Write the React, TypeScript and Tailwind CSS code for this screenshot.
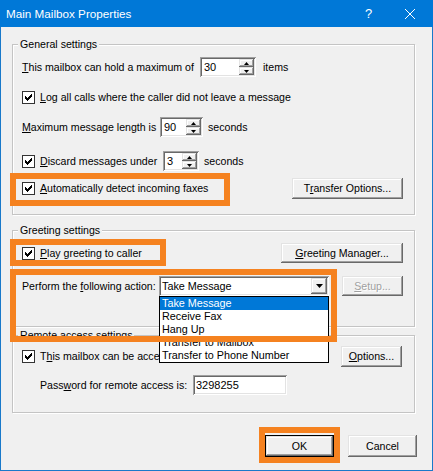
import React from "react";

const raised =
  "bg-[#f0f0f0] shadow-[inset_-1px_-1px_0_#696969,inset_1px_1px_0_#e3e3e3,inset_-2px_-2px_0_#a0a0a0,inset_2px_2px_0_#fff]";
const sunken =
  "bg-white shadow-[inset_1px_1px_0_#a0a0a0,inset_-1px_-1px_0_#fff,inset_2px_2px_0_#696969,inset_-2px_-2px_0_#e3e3e3]";
const group =
  "shrink-0 border border-[#c4c4c4] shadow-[inset_1px_1px_0_#fff,1px_1px_0_#fff]";

function U({ children }: { children: React.ReactNode }) {
  return <span className="underline underline-offset-[1px]">{children}</span>;
}

function Check() {
  const tops = [4, 5, 6, 5, 4, 3, 2];
  return (
    <span className="flex h-[13px] w-[13px] shrink-0 border border-[#333] bg-white">
      <svg width="11" height="11" viewBox="0 0 11 11">
        {tops.map((t, i) => (
          <rect key={i} x={2 + i} y={t} width="1" height="3" fill="#000" />
        ))}
      </svg>
    </span>
  );
}

function Btn({
  className,
  children,
  disabled,
}: {
  className: string;
  children: React.ReactNode;
  disabled?: boolean;
}) {
  return (
    <div
      className={`flex shrink-0 items-center justify-center ${raised} ${className} ${
        disabled ? "text-[#a0a0a0] [text-shadow:1px_1px_0_#fff]" : ""
      }`}
    >
      {children}
    </div>
  );
}

function Spin({ className, value }: { className: string; value: string }) {
  return (
    <div className={`flex h-[20px] shrink-0 p-[2px] ${sunken} ${className}`}>
      <span className="flex-1 pl-[2px] text-[11px] leading-[16px]">{value}</span>
      <div className="flex w-[15px] flex-col">
        <div className={`flex h-[8px] items-center justify-center ${raised}`}>
          <svg width="5" height="3" viewBox="0 0 5 3">
            <path d="M2.5 0L5 3H0z" fill="#000" />
          </svg>
        </div>
        <div className={`flex h-[8px] items-center justify-center ${raised}`}>
          <svg width="5" height="3" viewBox="0 0 5 3">
            <path d="M0 0H5L2.5 3z" fill="#000" />
          </svg>
        </div>
      </div>
    </div>
  );
}

function Legend({ children }: { children: React.ReactNode }) {
  return (
    <div className="-mt-[8px] ml-[5px] h-[14px] w-fit bg-[#f0f0f0] px-[2px] leading-[14px]">
      {children}
    </div>
  );
}

export default function App() {
  return (
    <div className="relative flex h-[471px] w-[433px] flex-col overflow-hidden font-['Liberation_Sans',Arial,sans-serif] text-[10.6px] leading-[13px] text-black">
      {/* Title bar */}
      <div className="flex h-[27px] shrink-0 items-center bg-[#0078d7] pl-[6px] pr-[18px] text-white">
        <span className="text-[11.7px] leading-[14px]">Main Mailbox Properties</span>
        <span className="ml-auto mr-[32px] w-[9px] text-center text-[13px] leading-[14px]">?</span>
        <svg width="10" height="10" viewBox="0 0 10 10">
          <path d="M0 0L10 10M10 0L0 10" stroke="#fff" strokeWidth="1" />
        </svg>
      </div>

      {/* Body */}
      <div className="flex flex-1 flex-col border-x border-b border-[#1979ca] bg-[#f0f0f0]">
        {/* General settings */}
        <div className={`ml-[11px] mt-[17px] h-[171px] w-[403px] ${group}`}>
          <Legend>General settings</Legend>
          <div className="mt-[6px] flex h-[20px] items-center pl-[9px]">
            <span className="w-[178px]">
              <U>T</U>his mailbox can hold a maximum of
            </span>
            <Spin className="w-[56px]" value="30" />
            <span className="ml-[7px]">items</span>
          </div>
          <div className="mt-[10px] flex h-[20px] items-center gap-[5px] pl-[9px]">
            <Check />
            <span>
              <U>L</U>og all calls where the caller did not leave a message
            </span>
          </div>
          <div className="mt-[10px] flex h-[20px] items-center pl-[9px]">
            <span className="w-[138px]">
              <U>M</U>aximum message length is
            </span>
            <Spin className="w-[43px]" value="90" />
            <span className="ml-[5px]">seconds</span>
          </div>
          <div className="mt-[14px] flex h-[20px] items-center pl-[9px]">
            <Check />
            <span className="ml-[5px] w-[123px]">
              <U>D</U>iscard messages under
            </span>
            <Spin className="w-[36px]" value="3" />
            <span className="ml-[5px]">seconds</span>
          </div>
          <div className="mt-[7px] flex h-[20px] items-center pl-[9px] pr-[11px]">
            <Check />
            <span className="ml-[5px]">
              <U>A</U>utomatically detect incoming faxes
            </span>
            <Btn className="ml-auto h-[21px] w-[111px]">
              <span>
                T<U>r</U>ansfer Options...
              </span>
            </Btn>
          </div>
        </div>

        {/* Greeting settings */}
        <div className={`ml-[11px] mt-[15px] h-[97px] w-[403px] ${group}`}>
          <Legend>Greeting settings</Legend>
          <div className="mt-[6px] flex h-[20px] items-center pl-[9px] pr-[11px]">
            <Check />
            <span className="ml-[5px]">
              <U>P</U>lay greeting to caller
            </span>
            <Btn className="ml-auto h-[20px] w-[122px]">
              <span>
                <U>G</U>reeting Manager...
              </span>
            </Btn>
          </div>
          <div className="mt-[13px] flex h-[20px] items-center pl-[9px] pr-[11px]">
            <span className="w-[137px]">
              Perform the <U>f</U>ollowing action:
            </span>
            <div className={`flex h-[20px] w-[170px] shrink-0 items-center p-[2px] ${sunken}`}>
              <span className="flex-1 pl-[1px] text-[10.8px]">Take Message</span>
              <div className={`flex h-[16px] w-[16px] items-center justify-center ${raised}`}>
                <svg width="7" height="4" viewBox="0 0 7 4">
                  <path d="M0 0H7L3.5 4z" fill="#000" />
                </svg>
              </div>
            </div>
            <Btn className="ml-auto h-[20px] w-[61px]" disabled>
              <span>
                <U>S</U>etup...
              </span>
            </Btn>
          </div>
        </div>

        {/* Remote access settings */}
        <div className={`ml-[11px] mt-[8px] h-[78px] w-[403px] ${group}`}>
          <Legend>Remote access settings</Legend>
          <div className="mt-[4px] flex h-[20px] items-center pl-[9px] pr-[12px]">
            <Check />
            <span className="ml-[5px]">
              T<U>h</U>is mailbox can be accessed remotely
            </span>
            <Btn className="ml-auto h-[21px] w-[61px]">
              <span>
                <U>O</U>ptions...
              </span>
            </Btn>
          </div>
          <div className="mt-[9px] flex h-[20px] items-center pl-[27px]">
            <span className="w-[153px]">
              Pass<U>w</U>ord for remote access is:
            </span>
            <div className={`flex h-[20px] w-[94px] items-center pl-[3px] ${sunken}`}>
              <span className="text-[11px]">3298255</span>
            </div>
          </div>
        </div>

        {/* Bottom buttons */}
        <div className="mt-[22px] flex justify-end gap-[14px] pr-[15px]">
          <div className="h-[22px] w-[69px] border border-black">
            <Btn className="h-full w-full">OK</Btn>
          </div>
          <Btn className="h-[22px] w-[69px]">Cancel</Btn>
        </div>
      </div>

      {/* Open dropdown list */}
      <div className="absolute left-[159px] top-[296px] flex w-[170px] flex-col border border-black bg-white text-[10.8px]">
        <div className="h-[13px] bg-[#0078d7] pl-[2px] leading-[13px] text-white">Take Message</div>
        <div className="h-[13px] pl-[2px] leading-[13px]">Receive Fax</div>
        <div className="h-[13px] pl-[2px] leading-[13px]">Hang Up</div>
        <div className="h-[13px] pl-[2px] leading-[13px]">Transfer to Mailbox</div>
        <div className="h-[13px] pl-[2px] leading-[13px]">Transfer to Phone Number</div>
      </div>

      {/* Orange annotation boxes */}
      <div className="pointer-events-none absolute left-[10px] top-[173px] h-[33px] w-[220px] border-[6px] border-[#f58220]" />
      <div className="pointer-events-none absolute left-[10px] top-[239px] h-[27px] w-[156px] border-[6px] border-[#f58220]" />
      <div className="pointer-events-none absolute left-[10px] top-[269px] h-[73px] w-[327px] border-[6px] border-[#f58220]" />
      <div className="pointer-events-none absolute left-[259px] top-[427px] h-[36px] w-[81px] border-[6px] border-[#f58220]" />
    </div>
  );
}
